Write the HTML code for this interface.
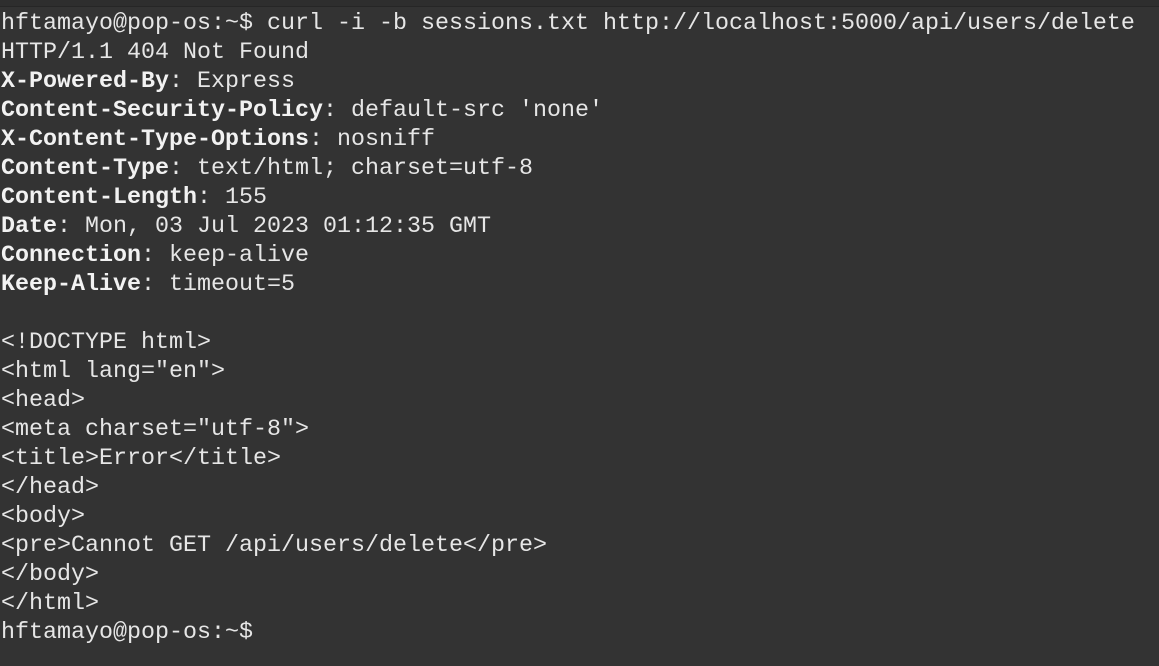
<!DOCTYPE html>
<html><head><meta charset="utf-8"><style>
html,body{margin:0;padding:0;background:#333333;width:1159px;height:666px;overflow:hidden}
.top{position:absolute;left:0;top:0;width:1159px;height:6px;background:#2e2e2e;border-bottom:1px solid #262626}
pre{position:absolute;left:1px;top:10px;margin:0;font-family:"Liberation Mono","DejaVu Sans Mono",monospace;font-size:23.33px;line-height:29px;color:#e6e6e6}
b{font-weight:bold;color:#f2f2f2}
</style></head><body><div class="top"></div><pre>hftamayo@pop-os:~$ curl -i -b sessions.txt http://localhost:5000/api/users/delete
HTTP/1.1 404 Not Found
<b>X-Powered-By</b>: Express
<b>Content-Security-Policy</b>: default-src 'none'
<b>X-Content-Type-Options</b>: nosniff
<b>Content-Type</b>: text/html; charset=utf-8
<b>Content-Length</b>: 155
<b>Date</b>: Mon, 03 Jul 2023 01:12:35 GMT
<b>Connection</b>: keep-alive
<b>Keep-Alive</b>: timeout=5

&lt;!DOCTYPE html&gt;
&lt;html lang="en"&gt;
&lt;head&gt;
&lt;meta charset="utf-8"&gt;
&lt;title&gt;Error&lt;/title&gt;
&lt;/head&gt;
&lt;body&gt;
&lt;pre&gt;Cannot GET /api/users/delete&lt;/pre&gt;
&lt;/body&gt;
&lt;/html&gt;
hftamayo@pop-os:~$</pre></body></html>
